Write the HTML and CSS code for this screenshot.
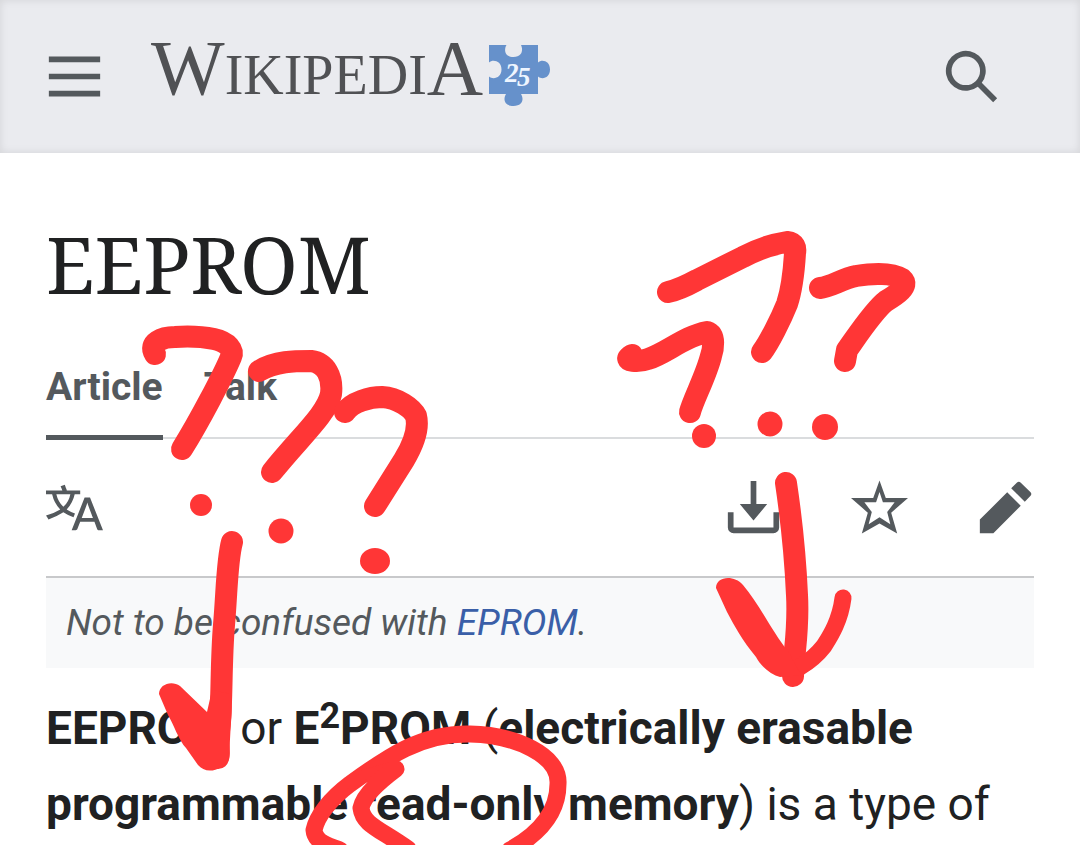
FILE: index.html
```html
<!DOCTYPE html>
<html lang="en">
<head>
<meta charset="utf-8">
<meta name="viewport" content="width=device-width, initial-scale=1">
<title>EEPROM - Wikipedia</title>
<link rel="stylesheet" href="styles.css">
</head>
<body>
<div class="page">
  <header class="header">
    <button class="icon-button" type="button" aria-label="Open main menu">
      <svg class="icon" viewBox="0 0 20 20"><path d="M1 3h18v2H1zm0 6h18v2H1zm0 6h18v2H1z"/></svg>
    </button>
    <a class="logo" href="#" aria-label="Wikipedia">
      <span class="wordmark"><span class="wordmark-cap">W</span>IKIPEDI<span class="wordmark-cap">A</span></span>
      <svg class="puzzle" viewBox="0 0 62 62">
        <path class="puzzle-piece" d="M0 0H17.500C15 4 15 12 24.500 12S34 4 32 0H49V17.500C53 14 61 16 61 24.500S53 35 49 31.500V49H32C35 54 34 61 24.500 61S14 54 17 49H0V31.500C4 35 12.500 33 12.500 24.500S4 14 0 17.500Z"/>
        <text class="puzzle-text" x="16" y="37">2</text>
        <text class="puzzle-text" x="28" y="41">5</text>
      </svg>
    </a>
    <button class="icon-button search" type="button" aria-label="Search">
      <svg class="icon" viewBox="0 0 20 20"><path d="M12.200 13.600a7 7 0 1 1 1.400-1.400l5.400 5.400-1.400 1.400zM3 8a5 5 0 1 0 10 0A5 5 0 0 0 3 8"/></svg>
    </button>
  </header>

  <main class="content">
    <h1 class="title">EEPROM</h1>
    <nav class="tabs">
      <a class="tab tab-active" href="#">Article</a>
      <a class="tab" href="#">Talk</a>
    </nav>
    <div class="actions">
      <button class="icon-button language" type="button" aria-label="Language">
        <svg class="icon" viewBox="0 0 20 20"><path d="M20 18h-1.440a.6.6 0 0 1-.4-.12.8.8 0 0 1-.23-.31L17 15h-5l-1 2.540a.8.8 0 0 1-.22.3.6.6 0 0 1-.4.140H9l4.550-11.470h1.890zm-3.530-4.310L14.890 9.500a12 12 0 0 1-.39-1.240q-.09.37-.19.69l-.19.560-1.580 4.190zm-6.300-1.580a13.400 13.400 0 0 1-2.910-1.410 11.460 11.460 0 0 0 2.810-5.370H12V4H7.310a4 4 0 0 0-.2-.56C6.870 2.790 6.600 2 6.600 2l-1.470.5s.4.890.6 1.500H0v1.330h2.150A11.230 11.230 0 0 0 5 10.700a17.200 17.200 0 0 1-5 2.100q.56.820.87 1.380a23.300 23.300 0 0 0 5.220-2.510 15.600 15.600 0 0 0 3.560 1.770zM3.630 5.330h4.910a8.100 8.100 0 0 1-2.450 4.450 9.100 9.100 0 0 1-2.460-4.450"/></svg>
      </button>
      <button class="icon-button" type="button" aria-label="Download">
        <svg class="icon" viewBox="0 0 20 20"><path d="M17 11.700V17H3v-5.300H1V17a2 2 0 0 0 2 2h14a2 2 0 0 0 2-2v-5.300zM10 14.600 5.200 8.800H9V.7h2v8.100h3.800z"/></svg>
      </button>
      <button class="icon-button" type="button" aria-label="Watch">
        <svg class="icon" viewBox="0 0 20 20"><path fill-rule="evenodd" d="M10 .5 12.200 6.700H20L14.100 11.800 16.200 19.100 10 15.600 3.800 19.100 5.900 11.800 0 6.700H7.800ZM10 4.600 8.800 8.200H4.700L7.300 11.600 6.200 15.900 10 13.400 13.800 15.900 12.700 11.600 15.300 8.200H11.200Z"/></svg>
      </button>
      <button class="icon-button" type="button" aria-label="Edit">
        <svg class="icon" viewBox="0 0 20 20"><path d="m16.770 8 1.940-2a1 1 0 0 0 0-1.410l-3.340-3.300a1 1 0 0 0-1.410 0L12 3.230zM1 14.250V19h4.750l9.600-9.600-4.750-4.750z"/></svg>
      </button>
    </div>
    <div class="hatnote">Not to be confused with <a class="link" href="#">EPROM</a>.</div>
    <p class="lead"><b>EEPROM</b> or <b>E<sup class="power">2</sup>PROM</b> (<b>electrically erasable programmable read-only memory</b>) is a type of</p>
  </main>

  <svg class="scribbles" viewBox="0 0 1080 845" aria-hidden="true">
    <g class="pen">
      <path d="M155 354C148 343 162 337 175 337C190 336 204 337 214 339C228 342 234 350 231 357C223 376 200 420 182 449"/>
      <path d="M259 371C275 361 295 361 311 361C326 363 333 377 331 394C327 414 300 437 272 472"/>
      <path d="M345 412C352 402 370 397 382 397C398 398 412 408 416 416C420 432 410 450 404 460L375 506"/>
      <path d="M232 542C227 560 227 590 224 625C221 660 222 700 220 720L218 758"/>
      <path d="M632 355C620 362 640 362 648 359C665 354 685 336 707 332C716 335 713 350 711 356C706 376 693 400 690 412"/>
      <path d="M668 292C678 290 686 286 697 280L743 257C760 248 774 244 787 242C795 243 796 248 795 253C794 270 791 292 787 304C781 319 769 343 762 352"/>
      <path d="M820 288C830 287 842 279 856 276C874 273 893 273 902 279C910 286 896 295 886 301C874 310 857 336 847 350L845 361"/>
      <path d="M786 483C790 510 795 550 797 595C799 630 794 650 793 676"/>
    </g>
    <path class="pen pen-thin" d="M843 598C840 622 829 638 824 646C817 655 810 661 800 667"/>
    <path class="pen pen-thin" d="M396 769C384 778 364 793 361 808C363 825 380 829 408 849M340 850C328 846 315 842 314 830C317 816 330 799 350 784C386 758 420 733 470 734C515 735 560 755 558 784C558 805 548 829 510 850"/>
    <g class="ink">
      <path d="M159 694C159 684 172 680 180 686L207 712 212 690 231 694C233 715 230 730 229 740C231 760 230 762 221 767C212 773 203 771 198 765L186 748C179 741 173 723 168 715Z"/>
      <path d="M716 588C716 577 733 574 743 585C760 605 774 635 788 651L801 675 780 677C772 675 761 667 756 657C742 640 735 627 727 612Z"/>
      <path d="M331 811C345 795 372 775 390 762L362 770Z"/>
      <circle cx="201" cy="505" r="11"/>
      <circle cx="281" cy="531" r="12.500"/>
      <ellipse cx="375" cy="561" rx="15" ry="13"/>
      <circle cx="704" cy="436" r="12"/>
      <circle cx="770" cy="424" r="12.500"/>
      <circle cx="825" cy="427" r="13"/>
    </g>
  </svg>
</div>
</body>
</html>
```

FILE: styles.css
```css
* {
  box-sizing: border-box;
}

body {
  margin: 0;
  background: #fff;
  color: #202122;
  font-family: Roboto, "Liberation Sans", sans-serif;
}

.page {
  position: relative;
  overflow: hidden;
}

.header {
  display: flex;
  align-items: center;
  height: 153px;
  padding: 0 80px 0 46px;
  background: #eaebef;
  box-shadow: inset 0 0 8px rgba(0, 0, 0, 0.1);
}

.icon-button {
  display: block;
  padding: 0;
  border: 0;
  background: none;
  color: #54595d;
}

.icon {
  display: block;
  width: 57px;
  height: 57px;
  fill: currentColor;
}

.logo {
  display: flex;
  align-items: center;
  gap: 6px;
  margin-left: 48px;
  color: #505154;
  text-decoration: none;
}

.wordmark {
  padding-bottom: 10px;
  font-family: "Liberation Serif", serif;
  font-size: 56px;
  line-height: 88px;
}

.wordmark-cap {
  font-size: 78px;
}

.puzzle {
  width: 62px;
  height: 62px;
  margin-bottom: 2px;
}

.puzzle-piece {
  fill: #6691cb;
}

.puzzle-text {
  fill: #eef5ff;
  font-family: "Liberation Serif", serif;
  font-size: 27px;
  font-style: italic;
  font-weight: 700;
}

.search {
  margin-left: auto;
}

.content {
  padding: 64px 46px 4px;
}

.title {
  margin: 0;
  font-family: "Noto Serif", "Liberation Serif", serif;
  font-size: 78px;
  font-weight: 400;
  line-height: 94px;
}

.tabs {
  display: flex;
  gap: 41px;
  margin-top: 50px;
  border-bottom: 2px solid #dadcde;
}

.tab {
  margin-bottom: -3px;
  padding-bottom: 22px;
  border-bottom: 5px solid transparent;
  color: #54595d;
  font-size: 39px;
  font-weight: 700;
  line-height: 52px;
  text-decoration: none;
}

.tab-active {
  border-bottom-color: #54595d;
}

.actions {
  display: flex;
  align-items: center;
  gap: 69px;
  height: 139px;
  border-bottom: 2px solid #c8c9cb;
}

.language {
  margin-right: auto;
}

.hatnote {
  padding: 20px;
  background: #f8f9fa;
  color: #54595d;
  font-size: 37px;
  font-style: italic;
  line-height: 50px;
}

.link {
  color: #3a5fa8;
  text-decoration: none;
}

.lead {
  margin: 22px 0 0;
  font-size: 46px;
  line-height: 76px;
}

.power {
  font-size: 36px;
  line-height: 1;
}

.scribbles {
  position: absolute;
  top: 0;
  left: 0;
  width: 1080px;
  height: 845px;
  pointer-events: none;
}

.pen {
  fill: none;
  stroke: #ff3636;
  stroke-width: 22px;
  stroke-linecap: round;
  stroke-linejoin: round;
}

.pen-thin {
  stroke-width: 17px;
}

.ink {
  fill: #ff3636;
}
```
